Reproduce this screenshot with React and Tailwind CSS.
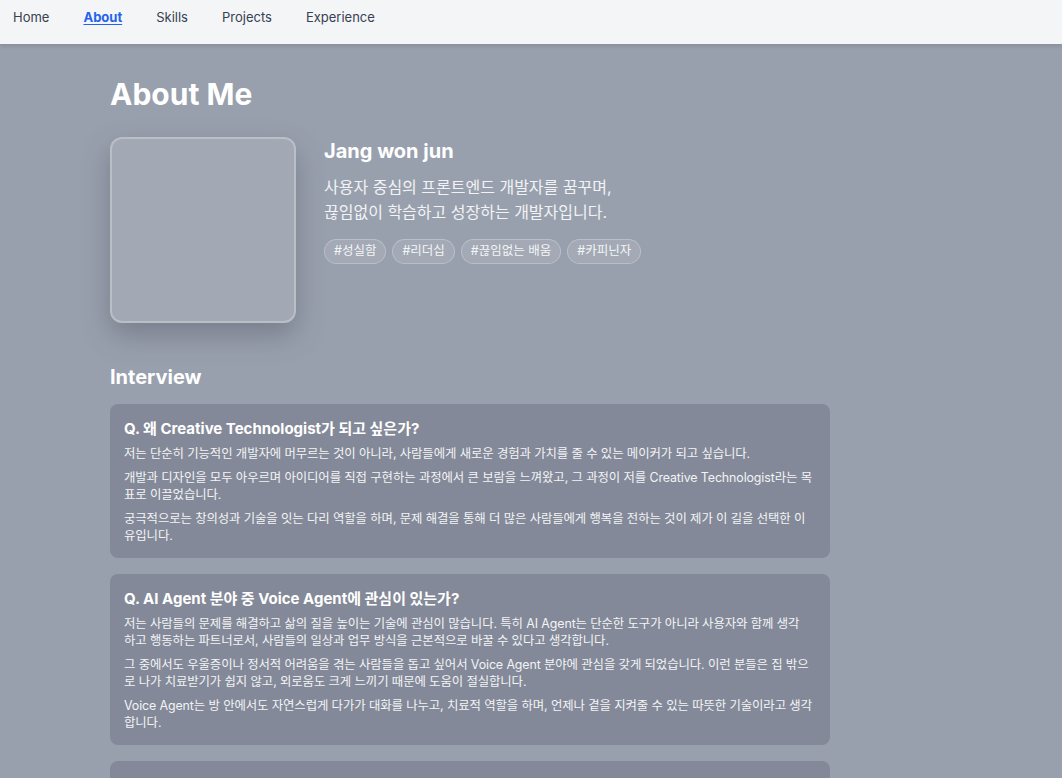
const navItems = ["Home", "About", "Skills", "Projects", "Experience"];

const tags = ["#성실함", "#리더십", "#끊임없는 배움", "#카피닌자"];

const interview = [
  {
    q: "Q. 왜 Creative Technologist가 되고 싶은가?",
    a: [
      "저는 단순히 기능적인 개발자에 머무르는 것이 아니라, 사람들에게 새로운 경험과 가치를 줄 수 있는 메이커가 되고 싶습니다.",
      "개발과 디자인을 모두 아우르며 아이디어를 직접 구현하는 과정에서 큰 보람을 느껴왔고, 그 과정이 저를 Creative Technologist라는 목표로 이끌었습니다.",
      "궁극적으로는 창의성과 기술을 잇는 다리 역할을 하며, 문제 해결을 통해 더 많은 사람들에게 행복을 전하는 것이 제가 이 길을 선택한 이유입니다.",
    ],
  },
  {
    q: "Q. AI Agent 분야 중 Voice Agent에 관심이 있는가?",
    a: [
      "저는 사람들의 문제를 해결하고 삶의 질을 높이는 기술에 관심이 많습니다. 특히 AI Agent는 단순한 도구가 아니라 사용자와 함께 생각\n하고 행동하는 파트너로서, 사람들의 일상과 업무 방식을 근본적으로 바꿀 수 있다고 생각합니다.",
      "그 중에서도 우울증이나 정서적 어려움을 겪는 사람들을 돕고 싶어서 Voice Agent 분야에 관심을 갖게 되었습니다. 이런 분들은 집 밖으로 나가 치료받기가 쉽지 않고, 외로움도 크게 느끼기 때문에 도움이 절실합니다.",
      "Voice Agent는 방 안에서도 자연스럽게 다가가 대화를 나누고, 치료적 역할을 하며, 언제나 곁을 지켜줄 수 있는 따뜻한 기술이라고 생각합니다.",
    ],
  },
  {
    q: "Q. 협업의 모토는?",
    a: [
      "함께 일하는 사람들과 목표를 공유하고, 서로의 강점을 살려 더 나은 결과를 만드는 것을 중요하게 생각합니다.",
    ],
  },
];

export default function App() {
  return (
    <div
      className="min-h-screen bg-[#99a0ad] text-white"
      style={{ fontFamily: 'Inter, "Noto Sans CJK KR", "Noto Sans", sans-serif' }}
    >
      <nav className="h-[44px] bg-[#f4f5f7] shadow-[0_2px_4px_rgba(0,0,0,0.12)] flex items-start pl-[13px] pt-[8px] gap-[34px]">
        {navItems.map((item) => (
          <a
            key={item}
            className={
              item === "About"
                ? "text-[13px] font-bold text-[#2563eb] underline underline-offset-2"
                : "text-[13px] text-[#374151]"
            }
          >
            {item}
          </a>
        ))}
      </nav>

      <main className="pl-[110px] pt-[32px] pb-10">
        <h1 className="text-[30px] leading-9 font-bold">About Me</h1>

        <section className="mt-[25px] flex gap-[28px]">
          <div className="w-[186px] h-[186px] shrink-0 rounded-xl border-2 border-white/25 bg-[#a3a9b4] shadow-[0_12px_28px_rgba(60,66,80,0.35)]" />
          <div>
            <h2 className="text-[20px] leading-7 font-bold">Jang won jun</h2>
            <p className="mt-[10px] text-[16px] leading-[25px] text-[#f1f3f6]">
              사용자 중심의 프론트엔드 개발자를 꿈꾸며,
              <br />
              끊임없이 학습하고 성장하는 개발자입니다.
            </p>
            <div className="mt-[14px] flex gap-[6px]">
              {tags.map((t) => (
                <span
                  key={t}
                  className="rounded-full border border-white/25 bg-white/10 px-[9px] h-[25px] flex items-center text-[12.5px] text-[#f4f5f7]"
                >
                  {t}
                </span>
              ))}
            </div>
          </div>
        </section>

        <h2 className="mt-[40px] text-[20px] leading-7 font-bold">Interview</h2>

        <div className="mt-[13px] w-[720px] flex flex-col gap-4">
          {interview.map((item) => (
            <div key={item.q} className="rounded-lg bg-[#838998] pl-[14px] pr-[15px] pt-[14px] pb-[14px]">
              <h3 className="text-[15px] leading-[22px] font-bold">{item.q}</h3>
              <div className="mt-[5px] flex flex-col gap-[7px]">
                {item.a.map((p, i) => (
                  <p key={i} className="whitespace-pre-line text-[12.4px] leading-[17px] tracking-[-0.1px] text-[#f3f4f6]">
                    {p}
                  </p>
                ))}
              </div>
            </div>
          ))}
        </div>
      </main>
    </div>
  );
}
